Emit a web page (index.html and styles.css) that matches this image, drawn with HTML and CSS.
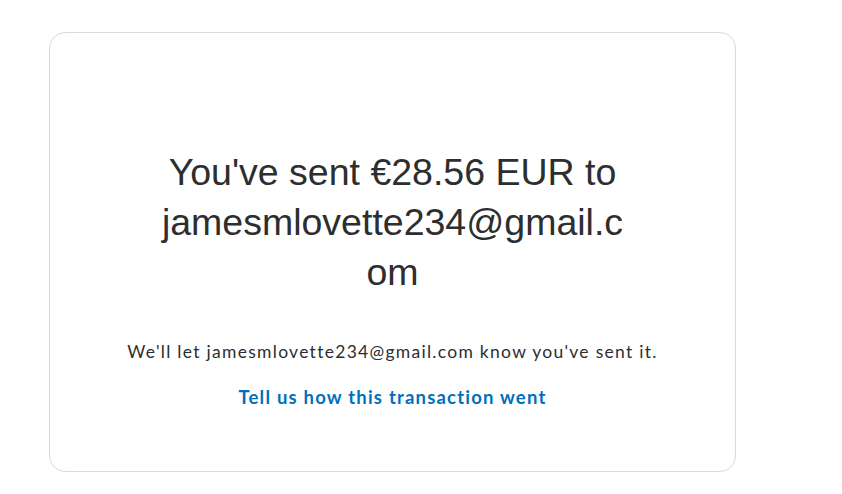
FILE: index.html
```html
<!DOCTYPE html>
<html lang="en">
<head>
<meta charset="utf-8">
<title>Payment sent</title>
<link rel="stylesheet" href="styles.css">
</head>
<body>
<main class="page">
  <section class="card">
    <h1 class="headline">You've sent €28.56 EUR to jamesmlovette234@gmail.com</h1>
    <p class="note">We'll let jamesmlovette234@gmail.com know you've sent it.</p>
    <a class="feedback" href="#">Tell us how this transaction went</a>
  </section>
</main>
</body>
</html>
```
FILE: styles.css
```css
html, body {
  margin: 0;
  padding: 0;
  background: #ffffff;
}
.page {
  padding: 32px 0 0 49px;
}
.card {
  box-sizing: border-box;
  width: 687px;
  height: 440px;
  border: 1px solid #dddbd3;
  border-radius: 16px;
  display: flex;
  flex-direction: column;
  align-items: center;
  padding-top: 114px;
}
.headline {
  margin: 0;
  width: 472px;
  font-family: "Liberation Sans", Arial, sans-serif;
  font-weight: 400;
  font-size: 37.5px;
  line-height: 50px;
  color: #2c2e2f;
  text-align: center;
  overflow-wrap: anywhere;
}
.note {
  margin: 43px 0 0;
  font-family: Lato, "Noto Sans", sans-serif;
  font-size: 17.5px;
  letter-spacing: 1.28px;
  line-height: 24px;
  color: #2c2e2f;
  text-align: center;
}
.feedback {
  margin-top: 21px;
  font-family: Lato, "Noto Sans", sans-serif;
  font-weight: 700;
  font-size: 18.5px;
  letter-spacing: 1.2px;
  line-height: 24px;
  color: #0070ba;
  text-decoration: none;
}
```
